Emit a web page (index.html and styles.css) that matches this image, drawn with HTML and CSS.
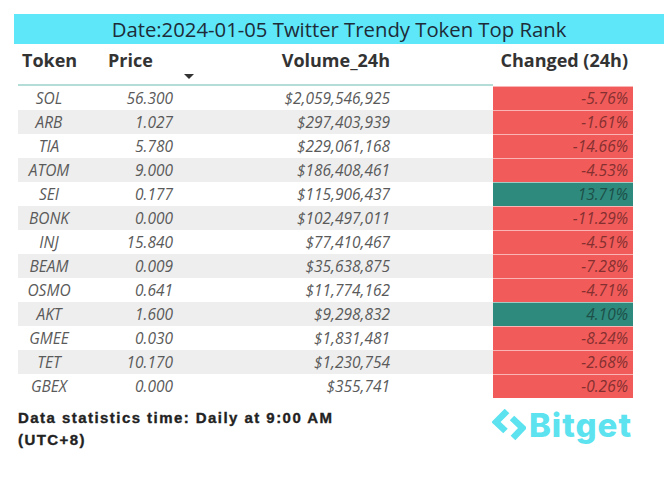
FILE: index.html
```html
<!DOCTYPE html>
<html>
<head>
<meta charset="utf-8">
<link rel="stylesheet" href="styles.css">
</head>
<body>
<div class="page">
  <div class="title">Date:2024-01-05 Twitter Trendy Token Top Rank</div>
  <div class="table">
    <div class="thead">
      <div class="th th-token">Token</div>
      <div class="th th-price">Price<span class="sort"></span></div>
      <div class="th th-vol">Volume_24h</div>
      <div class="th th-gap"></div>
      <div class="th th-chg">Changed (24h)</div>
    </div>
    <div class="row"><div class="c tok">SOL</div><div class="c num">56.300</div><div class="c vol">$2,059,546,925</div><div></div><div class="c chg neg">-5.76%</div></div>
    <div class="row alt"><div class="c tok">ARB</div><div class="c num">1.027</div><div class="c vol">$297,403,939</div><div></div><div class="c chg neg">-1.61%</div></div>
    <div class="row"><div class="c tok">TIA</div><div class="c num">5.780</div><div class="c vol">$229,061,168</div><div></div><div class="c chg neg">-14.66%</div></div>
    <div class="row alt"><div class="c tok">ATOM</div><div class="c num">9.000</div><div class="c vol">$186,408,461</div><div></div><div class="c chg neg">-4.53%</div></div>
    <div class="row"><div class="c tok">SEI</div><div class="c num">0.177</div><div class="c vol">$115,906,437</div><div></div><div class="c chg pos">13.71%</div></div>
    <div class="row alt"><div class="c tok">BONK</div><div class="c num">0.000</div><div class="c vol">$102,497,011</div><div></div><div class="c chg neg">-11.29%</div></div>
    <div class="row"><div class="c tok">INJ</div><div class="c num">15.840</div><div class="c vol">$77,410,467</div><div></div><div class="c chg neg">-4.51%</div></div>
    <div class="row alt"><div class="c tok">BEAM</div><div class="c num">0.009</div><div class="c vol">$35,638,875</div><div></div><div class="c chg neg">-7.28%</div></div>
    <div class="row"><div class="c tok">OSMO</div><div class="c num">0.641</div><div class="c vol">$11,774,162</div><div></div><div class="c chg neg">-4.71%</div></div>
    <div class="row alt"><div class="c tok">AKT</div><div class="c num">1.600</div><div class="c vol">$9,298,832</div><div></div><div class="c chg pos">4.10%</div></div>
    <div class="row"><div class="c tok">GMEE</div><div class="c num">0.030</div><div class="c vol">$1,831,481</div><div></div><div class="c chg neg">-8.24%</div></div>
    <div class="row alt"><div class="c tok">TET</div><div class="c num">10.170</div><div class="c vol">$1,230,754</div><div></div><div class="c chg neg">-2.68%</div></div>
    <div class="row"><div class="c tok">GBEX</div><div class="c num">0.000</div><div class="c vol">$355,741</div><div></div><div class="c chg neg">-0.26%</div></div>
  </div>
  <div class="footer">
    <div class="note">Data statistics time: Daily at 9:00 AM<br>(UTC+8)</div>
    <div class="logo">
      <svg class="logo-icon" width="34" height="32" viewBox="0 0 34 32">
        <path d="M15 2 L4 13 L13.5 22" fill="none" stroke="#5ce3ef" stroke-width="6.5" stroke-linejoin="miter"/>
        <path d="M20 9 L30.5 19 L21 29" fill="none" stroke="#5ce3ef" stroke-width="6.5" stroke-linejoin="miter"/>
      </svg>
      <span class="logo-text">Bitget</span>
    </div>
  </div>
</div>
</body>
</html>
```
FILE: styles.css
```css
html, body {
  margin: 0;
  padding: 0;
  background: #ffffff;
}
.page {
  width: 672px;
  height: 486px;
  padding-top: 14px;
  box-sizing: border-box;
}
.title {
  margin-left: 14px;
  width: 650px;
  height: 30px;
  background: #5de7f8;
  color: #1e2b38;
  font-family: "Open Sans", sans-serif;
  font-size: 20.3px;
  line-height: 30px;
  text-align: center;
}
.table {
  margin-left: 18px;
  width: 615px;
  font-family: "Open Sans", sans-serif;
}
.thead, .row {
  display: grid;
  grid-template-columns: 62px 100px 212px 101px 140px;
}
.thead {
  height: 40px;
  align-items: start;
  font-weight: 700;
  font-size: 18px;
  line-height: 24px;
  color: #333333;
  background-image: linear-gradient(#b4ddd7, #b4ddd7);
  background-size: 475px 2px;
  background-position: 0 100%;
  background-repeat: no-repeat;
  padding-bottom: 2px;
  box-sizing: content-box;
}
.th { padding-top: 4px; white-space: nowrap; }
.th-token { padding-left: 4px; }
.th-price { padding-left: 28px; position: relative; }
.sort {
  position: absolute;
  left: 104px;
  top: 30px;
  width: 0;
  height: 0;
  border-left: 5.5px solid transparent;
  border-right: 5.5px solid transparent;
  border-top: 5px solid #333;
}
.th-vol { text-align: right; padding-right: 2px; }
.th-chg { text-align: right; padding-right: 5px; }
.row {
  height: 24px;
  font-size: 15.5px;
  font-style: italic;
  color: #5a5a5a;
  line-height: 24px;
}
.row.alt { background: #eeeeee; }
.tok { text-align: center; }
.num { text-align: right; padding-right: 7px; }
.vol { text-align: right; padding-right: 2px; }
.chg {
  text-align: right;
  padding-right: 5px;
  box-sizing: border-box;
  border-top: 1px solid rgba(255,255,255,0.55);
  line-height: 22px;
}
.neg { background: #f15c5a; color: #853030; }
.pos { background: #2e8a7c; color: #1d4f48; }
.footer {
  display: flex;
  justify-content: space-between;
  width: 614px;
  margin-left: 18px;
  margin-top: 9px;
}
.note {
  font-family: "Liberation Sans", Arial, sans-serif;
  font-weight: 700;
  font-size: 15px;
  line-height: 22px;
  color: #222222;
  letter-spacing: 1.45px;
  -webkit-text-stroke: 0.35px #222222;
}
.logo {
  display: flex;
  align-items: flex-start;
  margin-top: 0;
}
.logo-icon { margin-top: 2px; margin-right: 3px; }
.logo-text {
  font-family: Inter, sans-serif;
  font-weight: 800;
  font-size: 33px;
  line-height: 36px;
  color: #5ce3ef;
  letter-spacing: 1px;
}
```
